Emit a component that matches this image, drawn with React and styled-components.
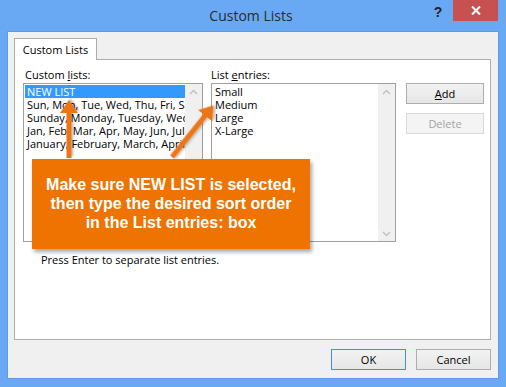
import styled, { createGlobalStyle } from "styled-components";

const GlobalStyle = createGlobalStyle`
  html, body {
    margin: 0;
    padding: 0;
    background: #69a9f3;
  }
  body {
    font-family: "Open Sans", "Noto Sans", sans-serif;
    font-size: 11px;
    color: #000;
  }
`;

const Window = styled.div`
  position: relative;
  width: 506px;
  height: 387px;
  box-sizing: border-box;
  background: #69a9f3;
  display: flex;
  flex-direction: column;
  padding: 0 7px 8px 7px;
  overflow: hidden;
`;

const TitleBar = styled.div`
  height: 31px;
  display: flex;
  align-items: flex-start;
  position: relative;
`;

const Title = styled.div`
  flex: 1;
  text-align: center;
  font-size: 14px;
  line-height: 31px;
  color: #2b2b2b;
  padding-left: 72px;
`;

const Help = styled.div`
  width: 30px;
  font-family: "Liberation Sans", sans-serif;
  font-weight: bold;
  font-size: 14px;
  line-height: 24px;
  color: #222;
  text-align: center;
`;

const Close = styled.div`
  width: 45px;
  height: 21px;
  background: #c75050;
  display: flex;
  align-items: center;
  justify-content: center;
  margin-right: 1px;
`;

const Body = styled.div`
  flex: 1;
  background: #f0f0f0;
  border: 1px solid #5d9be4;
  display: flex;
  flex-direction: column;
  padding: 6px 7px 0 6px;
`;

const TabStrip = styled.div`
  display: flex;
  height: 22px;
`;

const Tab = styled.div`
  width: 83px;
  height: 22px;
  box-sizing: border-box;
  background: #fff;
  border: 1px solid #adadad;
  border-bottom: none;
  text-align: center;
  line-height: 22px;
  font-size: 11px;
  position: relative;
  z-index: 1;
`;

const Panel = styled.div`
  height: 281px;
  box-sizing: border-box;
  background: #fff;
  border: 1px solid #adadad;
  margin-top: -1px;
  padding: 8px 0 0 8px;
  display: flex;
  flex-direction: column;
`;

const Columns = styled.div`
  display: flex;
  gap: 8px;
`;

const Field = styled.div`
  display: flex;
  flex-direction: column;
`;

const Label = styled.div`
  height: 15px;
  line-height: 13px;
  padding-left: ${(p) => p.$indent || 0}px;
  u {
    text-decoration: underline;
  }
`;

const ListBox = styled.div`
  width: ${(p) => p.$width}px;
  height: 159px;
  box-sizing: border-box;
  border: 1px solid #a0a0a0;
  display: flex;
  background: #fff;
`;

const Items = styled.div`
  flex: 1;
  padding: 1px 0 0 1px;
  overflow: hidden;
  white-space: nowrap;
`;

const Item = styled.div`
  height: 13px;
  line-height: 13px;
  padding-left: 2px;
  background: ${(p) => (p.$selected ? "#3399ff" : "transparent")};
  color: ${(p) => (p.$selected ? "#fff" : "#000")};
`;

const ScrollBar = styled.div`
  width: 17px;
  background: #f0f0f0;
  display: flex;
  flex-direction: column;
  justify-content: space-between;
  align-items: center;
  padding: 5px 0 4px;
`;

const Buttons = styled.div`
  display: flex;
  flex-direction: column;
  gap: 9px;
  padding-top: 15px;
  margin-left: 2px;
`;

const Button = styled.div`
  width: ${(p) => p.$width || 78}px;
  height: 21px;
  box-sizing: border-box;
  border: 1px solid ${(p) => (p.$primary ? "#3c92e6" : p.$disabled ? "#d9d9d9" : "#adadad")};
  background: ${(p) =>
    p.$disabled ? "#f4f4f4" : "linear-gradient(#f2f2f2, #e6e6e6)"};
  color: ${(p) => (p.$disabled ? "#a3a3a3" : "#000")};
  text-align: center;
  line-height: 19px;
  font-size: 11px;
`;

const Hint = styled.div`
  padding: 11px 0 0 18px;
  line-height: 13px;
`;

const Footer = styled.div`
  display: flex;
  justify-content: flex-end;
  gap: 10px;
  padding: 9px 0 0;
`;

const Callout = styled.div`
  position: absolute;
  left: 32px;
  top: 159px;
  width: 278px;
  height: 90px;
  box-sizing: border-box;
  background: #ef7300;
  box-shadow: 2px 3px 4px rgba(0, 0, 0, 0.35);
  color: #fff;
  font-family: "Liberation Sans", Arial, sans-serif;
  font-weight: bold;
  font-size: 16px;
  line-height: 19px;
  text-align: center;
  padding-top: 16px;
`;

const Arrows = styled.svg`
  position: absolute;
  left: 0;
  top: 0;
  pointer-events: none;
`;

const Chevron = ({ up }) => (
  <svg width="9" height="6" viewBox="0 0 9 6">
    <path
      d={up ? "M1 5 L4.5 1.5 L8 5" : "M1 1 L4.5 4.5 L8 1"}
      fill="none"
      stroke="#c2c2c2"
      strokeWidth="1.5"
    />
  </svg>
);

const Arrow = ({ x, y, length, angle }) => (
  <g transform={`translate(${x} ${y}) rotate(${angle})`}>
    <polygon
      points={`0,-2.5 ${length - 13},-2.5 ${length - 13},-9 ${length},0 ${length - 13},9 ${length - 13},2.5 0,2.5`}
      fill="#ec7417"
      filter="url(#shadow)"
    />
  </g>
);

const customLists = [
  "NEW LIST",
  "Sun, Mon, Tue, Wed, Thu, Fri, Sat",
  "Sunday, Monday, Tuesday, Wednesday",
  "Jan, Feb, Mar, Apr, May, Jun, Jul",
  "January, February, March, April",
];

const entries = ["Small", "Medium", "Large", "X-Large"];

export default function App() {
  return (
    <>
      <GlobalStyle />
      <Window>
        <TitleBar>
          <Title>Custom Lists</Title>
          <Help>?</Help>
          <Close>
            <svg width="10" height="9" viewBox="0 0 10 9">
              <path d="M1 0.5 L9 8.5 M9 0.5 L1 8.5" stroke="#fff" strokeWidth="2" />
            </svg>
          </Close>
        </TitleBar>
        <Body>
          <TabStrip>
            <Tab>Custom Lists</Tab>
          </TabStrip>
          <Panel>
            <Columns>
              <Field>
                <Label $indent={2}>
                  Custom <u>l</u>ists:
                </Label>
                <ListBox $width={180}>
                  <Items>
                    {customLists.map((l, i) => (
                      <Item key={l} $selected={i === 0}>
                        {l}
                      </Item>
                    ))}
                  </Items>
                  <ScrollBar>
                    <Chevron up />
                    <Chevron />
                  </ScrollBar>
                </ListBox>
              </Field>
              <Field>
                <Label>
                  List <u>e</u>ntries:
                </Label>
                <ListBox $width={185}>
                  <Items>
                    {entries.map((l) => (
                      <Item key={l}>{l}</Item>
                    ))}
                  </Items>
                  <ScrollBar>
                    <Chevron up />
                    <Chevron />
                  </ScrollBar>
                </ListBox>
              </Field>
              <Buttons>
                <Button>
                  <u>A</u>dd
                </Button>
                <Button $disabled>Delete</Button>
              </Buttons>
            </Columns>
            <Hint>Press Enter to separate list entries.</Hint>
          </Panel>
          <Footer>
            <Button $primary $width={75}>
              OK
            </Button>
            <Button $width={75}>Cancel</Button>
          </Footer>
        </Body>
        <Arrows width="506" height="387">
          <defs>
            <filter id="shadow" x="-50%" y="-50%" width="200%" height="200%">
              <feDropShadow dx="1.5" dy="1.5" stdDeviation="1" floodColor="#000" floodOpacity="0.3" />
            </filter>
          </defs>
          <Arrow x={69} y={158} length={58} angle={-90} />
          <Arrow x={172} y={157} length={66} angle={-51.2} />
        </Arrows>
        <Callout>
          Make sure NEW LIST is selected,
          <br />
          then type the desired sort order
          <br />
          in the List entries: box
        </Callout>
      </Window>
    </>
  );
}
